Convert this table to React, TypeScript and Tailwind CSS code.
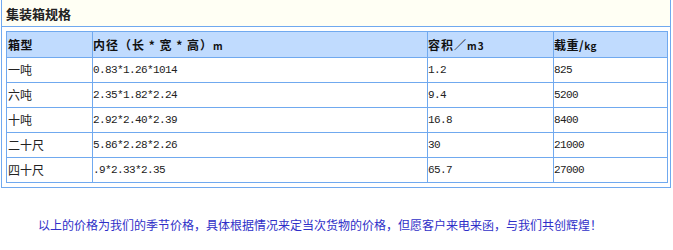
const rows = [
  ["一吨", "0.83*1.26*1014", "1.2", "825"],
  ["六吨", "2.35*1.82*2.24", "9.4", "5200"],
  ["十吨", "2.92*2.40*2.39", "16.8", "8400"],
  ["二十尺", "5.86*2.28*2.26", "30", "21000"],
  ["四十尺", ".9*2.33*2.35", "65.7", "27000"],
];

const cjk = "font-['SimSun','Noto_Sans_CJK_SC',sans-serif]";
const mono = "font-['Liberation_Mono','Noto_Sans_CJK_SC',monospace] text-[11px] tracking-[-0.6px]";
const th = "border border-[#70a9ef] text-left font-bold text-[12px] p-0 text-[#111]";

export default function App() {
  return (
    <div className={`w-[673px] h-[250px] bg-white text-[#222] ${cjk}`}>
      <div className="ml-px w-[670px] border-x border-b border-[#70a9ef] pb-1">
        <div className="h-[27px] border-b border-[#70a9ef] bg-[#fffff4] pl-1 flex items-center">
          <span className="text-[13px] font-bold leading-none text-[#222]">集装箱规格</span>
        </div>
        <div className="pt-1 pl-1">
          <table className="w-[661px] border-collapse table-fixed">
            <colgroup>
              <col className="w-[86px]" />
              <col className="w-[335px]" />
              <col className="w-[126px]" />
              <col className="w-[114px]" />
            </colgroup>
            <thead>
              <tr className="h-[26px] bg-[#c0dbfe]">
                <th className={`${th} pl-px tracking-[0.5px]`}>箱型</th>
                <th className={`${th} tracking-[1px] whitespace-pre`}>
                  内径（长 * 宽 * 高）<span className="text-[10px]">m</span>
                </th>
                <th className={`${th} tracking-[1px]`}>
                  容积／<span className="text-[10px]">m3</span>
                </th>
                <th className={`${th} tracking-[0.5px]`}>
                  载重/<span className="text-[10px]">kg</span>
                </th>
              </tr>
            </thead>
            <tbody>
              {rows.map((r) => (
                <tr key={r[0]} className="h-[25px]">
                  <td className="border border-[#70a9ef] p-0 pl-px text-[12px]">{r[0]}</td>
                  <td className={`border border-[#70a9ef] p-0 ${mono}`}>{r[1]}</td>
                  <td className={`border border-[#70a9ef] p-0 ${mono}`}>{r[2]}</td>
                  <td className={`border border-[#70a9ef] p-0 ${mono}`}>{r[3]}</td>
                </tr>
              ))}
            </tbody>
          </table>
        </div>
      </div>
      <p className="mt-[31px] pl-[38px] text-[12px] leading-none text-[#2f2fc8]">
        以上的价格为我们的季节价格，具体根据情况来定当次货物的价格，但愿客户来电来函，与我们共创辉煌！
      </p>
    </div>
  );
}
